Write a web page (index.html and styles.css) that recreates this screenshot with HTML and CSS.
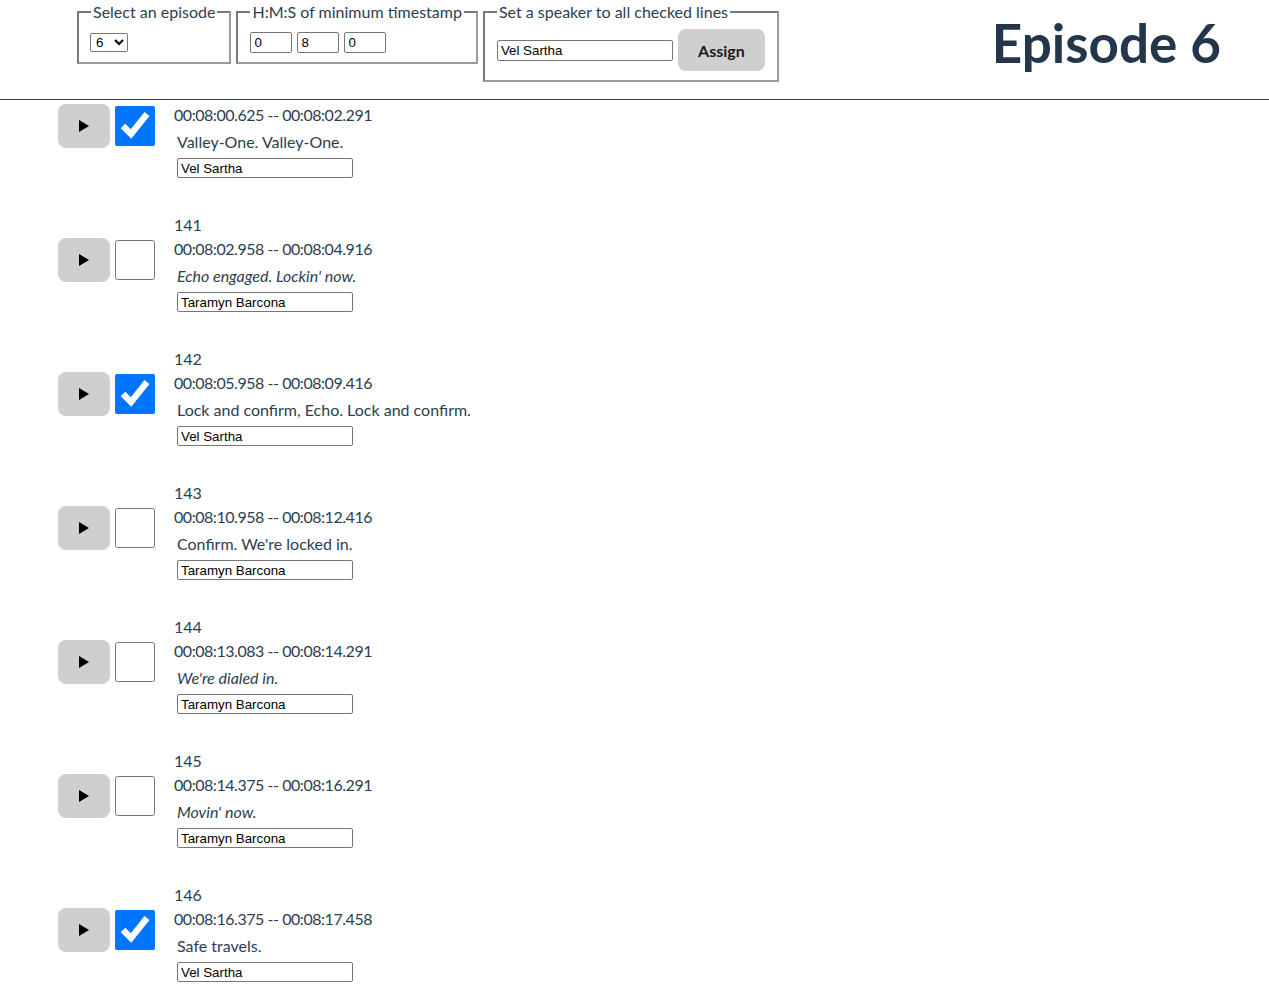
FILE: index.html
```html
<!DOCTYPE html>
<html lang="en">
<head>
    <meta charset="UTF-8">
    <title>Episode 6</title>
    <link rel="stylesheet" href="styles.css">
</head>
<body>
    <div class="header">
        <fieldset>
            <legend>Select an episode</legend>
            <div class="field-row">
                <select>
                    <option>5</option>
                    <option selected>6</option>
                    <option>7</option>
                </select>
            </div>
        </fieldset>
        <fieldset>
            <legend>H:M:S of minimum timestamp</legend>
            <div class="field-row">
                <input class="time-input" type="text" value="0">
                <input class="time-input" type="text" value="8">
                <input class="time-input" type="text" value="0">
            </div>
        </fieldset>
        <fieldset class="assign-box">
            <legend>Set a speaker to all checked lines</legend>
            <div class="field-row tall">
                <input class="speaker-input" type="text" value="Vel Sartha">
                <button class="btn">Assign</button>
            </div>
        </fieldset>
        <h1 class="title">Episode 6</h1>
    </div>

    <div class="lines">
        <div class="line">
            <div class="controls">
                <button class="play"><svg width="10" height="12" viewBox="0 0 10 12"><polygon points="0,0 10,6 0,12" fill="#000"/></svg></button>
                <input class="check" type="checkbox" checked>
            </div>
            <div class="line-body">
                <div class="num">140</div>
                <div class="stamp">00:08:00.625 -- 00:08:02.291</div>
                <div class="text">Valley-One. Valley-One.</div>
                <input class="speaker-input" type="text" value="Vel Sartha">
            </div>
        </div>
        <div class="line">
            <div class="controls">
                <button class="play"><svg width="10" height="12" viewBox="0 0 10 12"><polygon points="0,0 10,6 0,12" fill="#000"/></svg></button>
                <input class="check" type="checkbox">
            </div>
            <div class="line-body">
                <div class="num">141</div>
                <div class="stamp">00:08:02.958 -- 00:08:04.916</div>
                <div class="text"><i>Echo engaged. Lockin' now.</i></div>
                <input class="speaker-input" type="text" value="Taramyn Barcona">
            </div>
        </div>
        <div class="line">
            <div class="controls">
                <button class="play"><svg width="10" height="12" viewBox="0 0 10 12"><polygon points="0,0 10,6 0,12" fill="#000"/></svg></button>
                <input class="check" type="checkbox" checked>
            </div>
            <div class="line-body">
                <div class="num">142</div>
                <div class="stamp">00:08:05.958 -- 00:08:09.416</div>
                <div class="text">Lock and confirm, Echo. Lock and confirm.</div>
                <input class="speaker-input" type="text" value="Vel Sartha">
            </div>
        </div>
        <div class="line">
            <div class="controls">
                <button class="play"><svg width="10" height="12" viewBox="0 0 10 12"><polygon points="0,0 10,6 0,12" fill="#000"/></svg></button>
                <input class="check" type="checkbox">
            </div>
            <div class="line-body">
                <div class="num">143</div>
                <div class="stamp">00:08:10.958 -- 00:08:12.416</div>
                <div class="text">Confirm. We're locked in.</div>
                <input class="speaker-input" type="text" value="Taramyn Barcona">
            </div>
        </div>
        <div class="line">
            <div class="controls">
                <button class="play"><svg width="10" height="12" viewBox="0 0 10 12"><polygon points="0,0 10,6 0,12" fill="#000"/></svg></button>
                <input class="check" type="checkbox">
            </div>
            <div class="line-body">
                <div class="num">144</div>
                <div class="stamp">00:08:13.083 -- 00:08:14.291</div>
                <div class="text"><i>We're dialed in.</i></div>
                <input class="speaker-input" type="text" value="Taramyn Barcona">
            </div>
        </div>
        <div class="line">
            <div class="controls">
                <button class="play"><svg width="10" height="12" viewBox="0 0 10 12"><polygon points="0,0 10,6 0,12" fill="#000"/></svg></button>
                <input class="check" type="checkbox">
            </div>
            <div class="line-body">
                <div class="num">145</div>
                <div class="stamp">00:08:14.375 -- 00:08:16.291</div>
                <div class="text"><i>Movin' now.</i></div>
                <input class="speaker-input" type="text" value="Taramyn Barcona">
            </div>
        </div>
        <div class="line">
            <div class="controls">
                <button class="play"><svg width="10" height="12" viewBox="0 0 10 12"><polygon points="0,0 10,6 0,12" fill="#000"/></svg></button>
                <input class="check" type="checkbox" checked>
            </div>
            <div class="line-body">
                <div class="num">146</div>
                <div class="stamp">00:08:16.375 -- 00:08:17.458</div>
                <div class="text">Safe travels.</div>
                <input class="speaker-input" type="text" value="Vel Sartha">
            </div>
        </div>
    </div>
</body>
</html>
```

FILE: styles.css
```css
* { box-sizing: border-box; }

body {
    margin: 0;
    font-family: Lato, "Open Sans", sans-serif;
    font-size: 16px;
    color: #2c3e50;
    background: #fff;
}

/* fixed header, the list scrolls under it */
.header {
    position: fixed;
    top: 0;
    left: 0;
    right: 0;
    height: 100px;
    background: #fff;
    border-bottom: 1px solid #2c3e50;
    display: flex;
    align-items: flex-start;
    gap: 5px;
    padding: 2px 48px 0 77px;
    z-index: 10;
}

fieldset {
    margin: 0;
    padding: 8px 12px 7px;
    border: 2px solid #8a8a8a;
    border-color: #7a7a7a #9a9a9a #9a9a9a #7a7a7a;
}

.assign-box {
    padding-bottom: 9px;
}

legend {
    padding: 0 2px;
    line-height: 19px;
}

.field-row {
    display: flex;
    align-items: center;
    gap: 5px;
    height: 26px;
}

.field-row.tall {
    height: 42px;
}

select {
    width: 38px;
    height: 19px;
    font-family: "Liberation Sans", Arial, sans-serif;
    font-size: 13.33px;
    padding: 0 0 0 1px;
    border: 1px solid #767676;
    border-radius: 2px;
    margin-left: -1px;
    background: #fff;
    color: #000;
}

.time-input {
    width: 42px;
    height: 21px;
    font-family: "Liberation Sans", Arial, sans-serif;
    font-size: 13.33px;
    padding: 1px 3px;
    border: 1px solid #767676;
    border-radius: 2px;
    color: #000;
}

.speaker-input {
    width: 176px;
    height: 20px;
    font-family: "Liberation Sans", Arial, sans-serif;
    font-size: 13.33px;
    padding: 1px 3px;
    border: 1px solid #767676;
    border-radius: 2px;
    color: #000;
}

.assign-box .speaker-input {
    height: 21px;
    margin-top: 1px;
}

.btn {
    width: 87px;
    height: 42px;
    background: #cfcfcf;
    border: none;
    border-radius: 8px;
    font-family: Lato, "Open Sans", sans-serif;
    font-size: 16px;
    font-weight: 700;
    color: #1b1b1b;
}

.title {
    margin: 11px 0 0 auto;
    font-size: 53px;
    font-weight: 700;
    line-height: 60px;
    color: #24364b;
}

.lines {
    padding: 79px 0 40px 58px;
}

.line {
    display: flex;
    align-items: center;
    margin-bottom: 35px;
}

.controls {
    display: flex;
    align-items: center;
    gap: 5px;
    margin-bottom: 5px;
}

.play {
    width: 52px;
    height: 44px;
    background: #cfcfcf;
    border: none;
    border-radius: 8px;
    padding: 0;
    display: flex;
    align-items: center;
    justify-content: center;
}

.check {
    width: 40px;
    height: 40px;
    margin: 0;
    accent-color: #0075ff;
}

.line-body {
    margin-left: 19px;
    display: flex;
    flex-direction: column;
    align-items: flex-start;
}

.num,
.stamp {
    line-height: 24px;
}

.stamp {
    letter-spacing: -0.45px;
}

.text {
    line-height: 24px;
    margin: 3px 0 4px 3px;
}

.line-body .speaker-input {
    margin-left: 3px;
}
```
